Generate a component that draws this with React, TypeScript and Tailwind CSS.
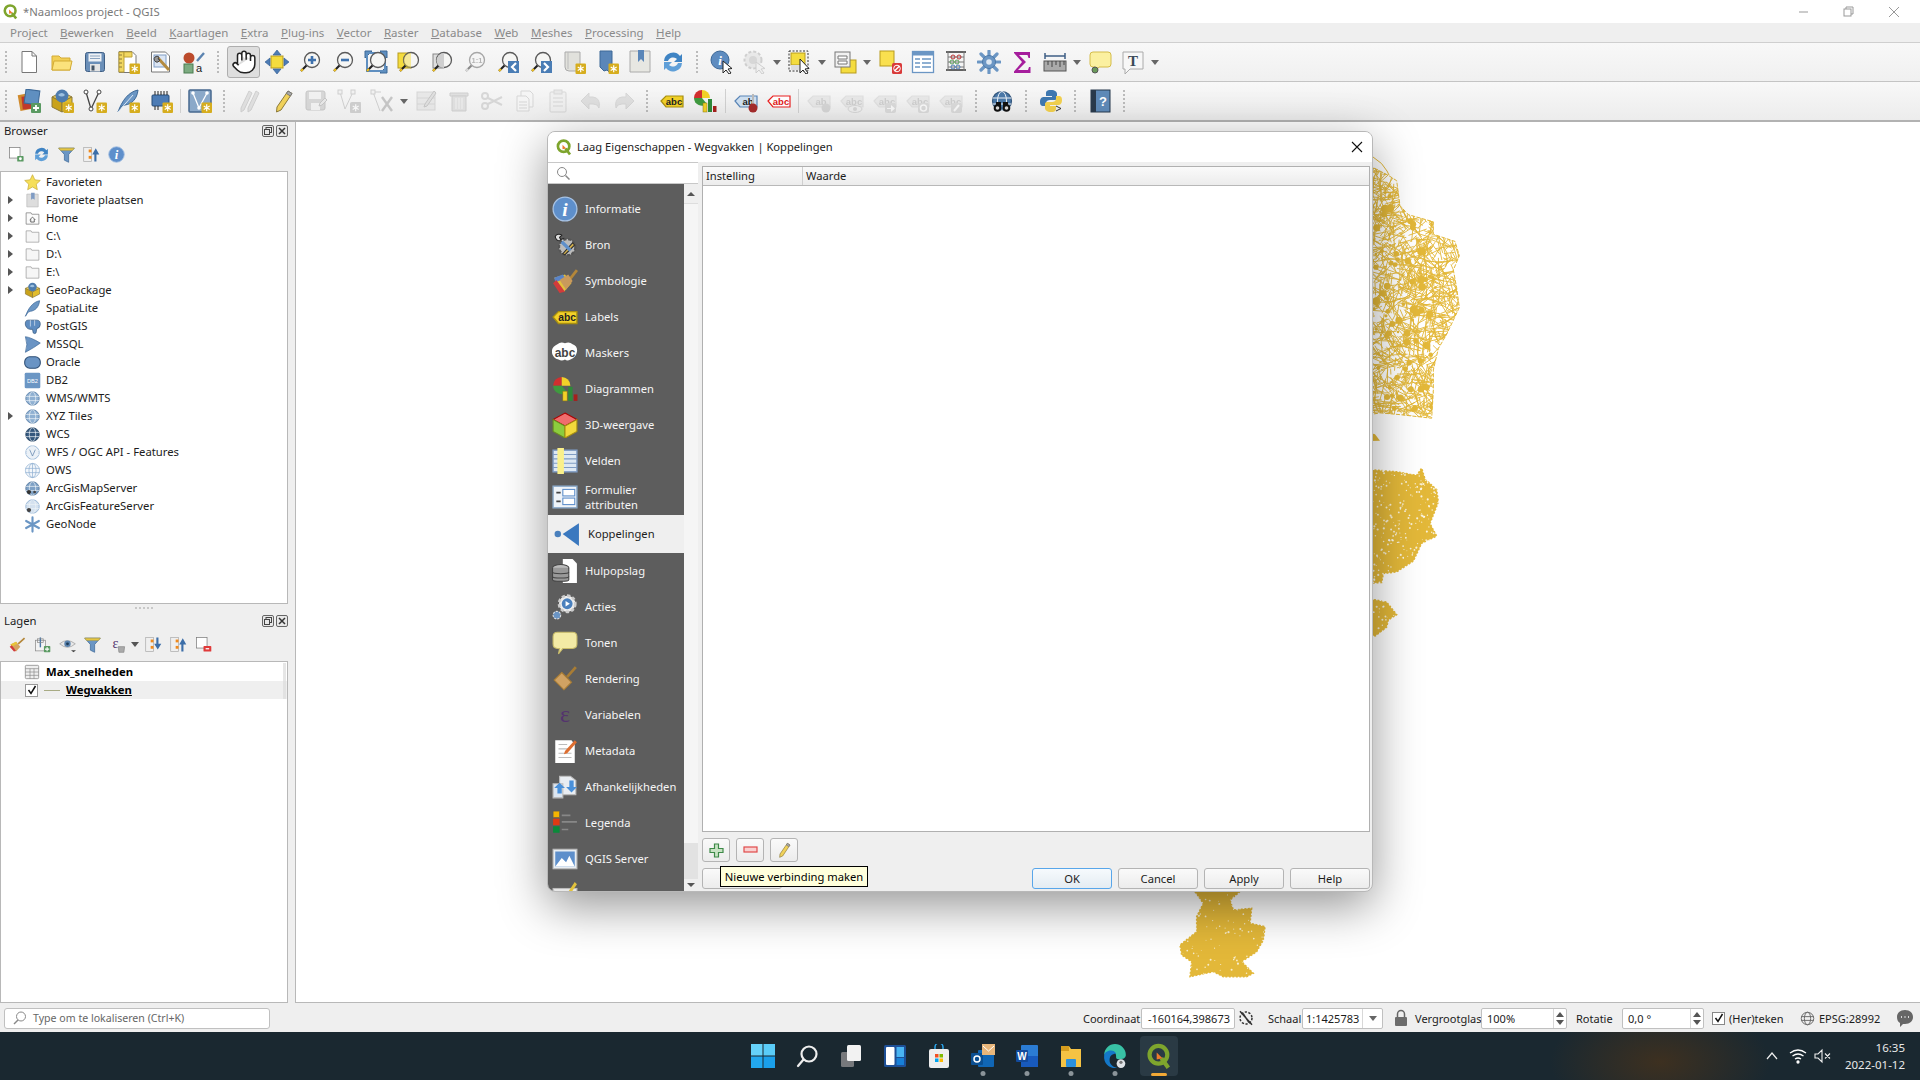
import React, { useMemo } from "react";

const Bdg = (
  <g>
    <rect x="13.5" y="13.5" width="10.5" height="10.5" rx="1" fill="#d6ad1e" />
    <path d="M18.7 15.2v7M15.7 17l6 3.5M21.7 17l-6 3.5" stroke="#fff" strokeWidth="1.2" />
  </g>
);
const Mag = ({ children }: { children?: React.ReactNode }) => (
  <g>
    <path d="M9 15L3 21" stroke="#222" strokeWidth="2.2" />
    <path d="M5 19L3 21" stroke="#f0c020" strokeWidth="2.2" />
    <circle cx="14" cy="10" r="7.5" fill="#f6f6f4" stroke="#5a5a5a" strokeWidth="1.3" />
    {children}
  </g>
);
const Globe = ({ f = "#8fb0d2", s = "#5a7fa8" }: { f?: string; s?: string }) => (
  <g fill="none" stroke={s}>
    <circle cx="12" cy="12" r="9.5" fill={f} strokeWidth="1.2" />
    <ellipse cx="12" cy="12" rx="4.5" ry="9.5" stroke="#eef3f8" />
    <path d="M2.8 9h18.4M2.8 15h18.4" stroke="#eef3f8" />
  </g>
);
const Tag = ({ f, s, t, tc = "#222" }: { f: string; s: string; t: string; tc?: string }) => (
  <g>
    <path d="M1 12l5-5h17v11H6z" fill={f} stroke={s} strokeWidth="1.2" />
    <text x="14" y="15.8" fontSize="9.5" fontWeight="700" textAnchor="middle" fill={tc} fontFamily="Liberation Sans, sans-serif">{t}</text>
  </g>
);
const Qlogo = (
  <g fill="none">
    <circle cx="11.5" cy="11" r="7.6" stroke="#7ea52d" strokeWidth="3.6" />
    <path d="M14 14l6 8" stroke="#7ea52d" strokeWidth="3.6" />
    <path d="M10 9l5 5-5 1z" fill="#ee7b2d" />
  </g>
);
const Pencil = (
  <g>
    <path d="M17 2l4 2.5L10 21l-4.5 2 .5-5z" fill="#f0d15a" stroke="#8c7a3a" />
    <path d="M17 2l4 2.5-1.6 2.5-4-2.5z" fill="#a9a9a9" stroke="#777" />
  </g>
);
const I: Record<string, React.ReactNode> = {
  doc: <g fill="#fff" stroke="#777"><path d="M5 1.5h10l4.5 4.5v16.5H5z" /><path d="M15 1.5V6h4.5" fill="none" /></g>,
  folder: <g stroke="#d3ab35"><path d="M2 20V6h7l2 2h9v12z" fill="#f2cf55" /><path d="M2 20l2-9h18l-2 9z" fill="#fbe27c" /></g>,
  save: <g><rect x="2.5" y="2.5" width="19" height="19" rx="2" fill="#6b8fb8" stroke="#3f5f85" /><rect x="5.5" y="3.5" width="13" height="8" fill="#eef1f5" /><path d="M7 6h10M7 8.5h10" stroke="#8aa3c0" /><rect x="7" y="14" width="10" height="7.5" fill="#e4e4e4" /><rect x="8.5" y="15.5" width="3" height="5" fill="#456" /></g>,
  newlayout: <g><path d="M3 1.5h13l4 4v17H3z" fill="#fff" stroke="#777" /><path d="M3 2h5v20H3z" fill="#f1d762" stroke="#bda136" /><path d="M3 5h3M3 9h3M3 13h3M3 17h3" stroke="#8c7a3a" /><path d="M8 2h8v5H8z" fill="#f1d762" stroke="#bda136" />{Bdg}</g>,
  layoutmgr: <g><path d="M2.5 2h14l4 4v16h-18z" fill="#fff" stroke="#777" /><rect x="5" y="5" width="12" height="12" fill="#dce6f4" stroke="#7f9cc4" /><path d="M9 8l11 12" stroke="#b48b3f" strokeWidth="3" /><path d="M6 7a3 3 0 0 1 4 0l-1 2 2 1-2 2a3 3 0 0 1-3-5z" fill="#999" stroke="#444" /></g>,
  style: <g><circle cx="7" cy="8" r="5.5" fill="#bc4b2c" /><rect x="2" y="14" width="9" height="9" fill="#7dab81" stroke="#4a7c50" /><path d="M15 11l7-8" stroke="#5b83b0" strokeWidth="2.4" /><text x="17" y="22" fontSize="11" fill="#222" textAnchor="middle" fontFamily="Liberation Sans, sans-serif">a</text></g>,
  hand: <path d="M18 11V6a2 2 0 0 0-2-2a2 2 0 0 0-2 2M14 10V4a2 2 0 0 0-2-2a2 2 0 0 0-2 2v2M10 10.500V6a2 2 0 0 0-2-2a2 2 0 0 0-2 2v8M18 8a2 2 0 1 1 4 0v6a8 8 0 0 1-8 8h-2c-2.800 0-4.500-.86-5.990-2.340l-3.600-3.600a2 2 0 0 1 2.830-2.820L7 15" fill="#fff" stroke="#222" strokeWidth="1.400" />,
  pansel: <g><rect x="6" y="6" width="12" height="12" fill="#f4dc3e" stroke="#b79b1f" /><g fill="#4d7cb5" stroke="#2f5a90" strokeWidth=".6"><path d="M12 0l4 5H8zM12 24l-4-5h8zM0 12l5-4v8zM24 12l-5 4V8z" /></g></g>,
  zin: <Mag><path d="M10 10h8M14 6v8" stroke="#3f72ad" strokeWidth="2.600" /></Mag>,
  zout: <Mag><path d="M10 10h8" stroke="#3f72ad" strokeWidth="2.600" /></Mag>,
  zfull: <g><g fill="#5f8fc0" stroke="#3c6897"><path d="M1 1h7L1 8zM23 1h-7l7 7zM23 23h-7l7-7z" /></g><rect x="3" y="3" width="18" height="18" fill="none" stroke="#5f8fc0" strokeWidth="2" /><Mag /></g>,
  zsel: <g><rect x="1" y="3" width="13" height="15" fill="#f4dc3e" stroke="#b79b1f" /><Mag /><path d="M14 3a7.500 7.500 0 0 0 0 15z" fill="#f4dc3e" opacity=".5" /></g>,
  zlayer: <g><rect x="3" y="4" width="10" height="14" fill="#dedede" stroke="#888" /><Mag /><path d="M14 3a7.500 7.500 0 0 0 0 15z" fill="#cfcfcf" /></g>,
  z11: <g><Mag /><text x="14" y="13" fontSize="7.500" fontWeight="700" textAnchor="middle" fill="#777" fontFamily="Liberation Sans, sans-serif">1:1</text></g>,
  zlast: <g><Mag /><rect x="12" y="11" width="11" height="12" fill="#4a7db5" /><path d="M20 13l-4 4 4 4" fill="none" stroke="#fff" strokeWidth="2.200" /></g>,
  znext: <g><Mag /><rect x="12" y="11" width="11" height="12" fill="#4a7db5" /><path d="M15 13l4 4-4 4" fill="none" stroke="#fff" strokeWidth="2.200" /></g>,
  bmnew: <g><path d="M3 2h15v19H7a4 4 0 0 1-4-4z" fill="#e1e1dc" stroke="#aaa" /><path d="M6 2v17" stroke="#bbb" />{Bdg}</g>,
  bm: <g><path d="M5 1h12v16l-3 5-2-2-3 1-4-4z" fill="#5a86b8" stroke="#3c6897" />{Bdg}</g>,
  bmlist: <g><path d="M2 1h20v21H2z" fill="#e7e7e2" stroke="#aaa" /><path d="M10 0h6v12l-3-3-3 3z" fill="#5a86b8" /></g>,
  refresh: <g fill="#3f84c4"><path d="M3 11a9 9 0 0 1 16-5l2-2v8h-8l3-3a5.500 5.500 0 0 0-9 2z" /><path d="M21 13a9 9 0 0 1-16 5l-2 2v-8h8l-3 3a5.500 5.500 0 0 0 9-2z" fill="#5f9fd8" /></g>,
  identify: <g><circle cx="10" cy="10" r="9" fill="#5e8cc0" stroke="#3c6897" /><text x="10" y="15" fontSize="13" fontWeight="700" fontStyle="italic" fill="#fff" textAnchor="middle" fontFamily="Liberation Serif, serif">i</text><path d="M13 11v12l3-3 3 4 2-1-3-4 4-.5z" fill="#fff" stroke="#222" /></g>,
  action: <g><circle cx="10" cy="10" r="8.500" fill="#ddd" stroke="#aaa" strokeDasharray="3 2" strokeWidth="2" /><circle cx="10" cy="10" r="4" fill="#bbb" /><path d="M13 12v11l3-3 3 4 2-1-3-4 4-.5z" fill="#eee" stroke="#aaa" /></g>,
  select: <g><rect x="1" y="1" width="19" height="20" fill="none" stroke="#333" strokeDasharray="2 1.500" /><rect x="3" y="3" width="14" height="12" fill="#f4dc3e" stroke="#b79b1f" /><rect x="3" y="15" width="14" height="5" fill="#ddd" /><path d="M12 9v14l3-3 3 4 2-1-3-4 4-.5z" fill="#fff" stroke="#222" /></g>,
  tblsel: <g><rect x="8" y="10" width="15" height="13" fill="#f4dc3e" stroke="#b79b1f" /><rect x="2" y="2" width="15" height="15" fill="#f1f1f1" stroke="#777" /><path d="M5 6h9v3H5zM5 11h9v3H5z" fill="#fff" stroke="#777" /></g>,
  desel: <g><rect x="2" y="1" width="14" height="15" fill="#f9e04f" stroke="#b79b1f" /><rect x="14" y="13" width="10" height="11" rx="1.500" fill="#d93a3a" /><path d="M16.500 21l5-5" stroke="#fff" strokeWidth="1.500" /><circle cx="19" cy="18.500" r="3.300" fill="none" stroke="#fff" /></g>,
  attr: <g><rect x="1.500" y="1.500" width="21" height="21" fill="#fff" stroke="#6b96c4" strokeWidth="1.300" /><rect x="1.500" y="1.500" width="21" height="4" fill="#6b96c4" /><path d="M4 9h5M4 13h5M4 17h5M11 9h9M11 13h9M11 17h9" stroke="#6b96c4" strokeWidth="1.500" /></g>,
  abacus: <g fill="none"><path d="M2 2h20M2 20h20" stroke="#333" strokeWidth="1.500" /><path d="M4 1v20M20 1v20M4 7h16M4 12h16M4 17h16" stroke="#777" /><g stroke="#b33"><circle cx="9" cy="7" r="2" /><circle cx="15" cy="7" r="2" /></g><g stroke="#5a9e5a"><circle cx="8" cy="12" r="2" /><circle cx="13" cy="12" r="2" /></g><g stroke="#4d7cb5"><circle cx="9" cy="17" r="2" /><circle cx="14" cy="17" r="2" /></g></g>,
  gear: <g><path d="M12 1v5M12 18v5M1 12h5M18 12h5M4 4l4 4M16 16l4 4M20 4l-4 4M8 16l-4 4" stroke="#6b96c4" strokeWidth="3.200" strokeLinecap="round" /><circle cx="12" cy="12" r="6.500" fill="#6b96c4" stroke="#4a78a8" /><circle cx="12" cy="12" r="2.800" fill="#dde8f3" /></g>,
  sigma: <path d="M4 2h16v6l-1.500 0-1-3H9l7 7-8 8h10l1-3h1.500v6H4v-1.500l8-9.500-8-9z" fill="#a51d9c" />,
  ruler: <g><path d="M2 3v6M22 3v6M2 6h20" stroke="#3f5f85" strokeWidth="1.500" /><rect x="1" y="11" width="22" height="10" fill="#aaa" stroke="#555" /><path d="M5 11v4M9 11v6M13 11v4M17 11v6M21 11v4" stroke="#444" /></g>,
  tip: <g><path d="M2 5q0-3 3-3h15q3 0 3 3v9q0 3-3 3H11l-4 5v-5H5q-3 0-3-3z" fill="#fbf0a0" stroke="#d4bc4a" /><circle cx="7" cy="20" r="3" fill="#6a9a5a" stroke="#555" /></g>,
  textann: <g><path d="M2 2h20v17H9l-5 5v-5H2z" fill="#f7f7f7" stroke="#aaa" /><text x="12" y="16" fontSize="15" fontWeight="700" textAnchor="middle" fill="#3c4a58" fontFamily="Liberation Serif, serif">T</text></g>,

  dsm: <g><rect x="2" y="5" width="12" height="16" fill="#d08a2c" transform="rotate(-10 8 13)" /><rect x="5" y="7" width="12" height="13" fill="#c0392b" transform="rotate(-6 11 13)" /><rect x="8" y="1" width="14" height="14" fill="#5f8fc0" stroke="#3c6897" transform="rotate(8 15 8)" /><rect x="14" y="14" width="10" height="10" rx="1" fill="#5a9a62" /><path d="M19 16v6M16 19h6" stroke="#fff" strokeWidth="1.800" /></g>,
  gpkg: <g><path d="M12 3l10 5-10 5L2 8z" fill="#f2cf55" stroke="#8c7a3a" /><path d="M2 8v10l10 5V13z" fill="#c9a21a" stroke="#8c7a3a" /><path d="M22 8v10l-10 5V13z" fill="#e2bd2e" stroke="#8c7a3a" /><circle cx="12" cy="7" r="6.500" fill="#4e7cae" /><path d="M8 6q4-4 7 0-3 3-7 0z" fill="#9cc0e0" />{Bdg}</g>,
  vnew: <g fill="none" stroke="#444"><path d="M3 3l5 17 8-17" strokeWidth="1.300" /><circle cx="3" cy="3" r="2" fill="#fff" /><circle cx="16" cy="3" r="2" fill="#fff" /><circle cx="8" cy="20" r="2" fill="#fff" /><g stroke="none">{Bdg}</g></g>,
  feather: <g><path d="M2 23C6 12 12 3 22 1c-1 9-6 14-13 15l-3 1z" fill="#6b96c4" stroke="#3c6897" /><path d="M2 23L17 6" stroke="#dce8f3" />{Bdg}</g>,
  chip: <g><rect x="3" y="6" width="17" height="11" rx="1" fill="#4d7cb5" stroke="#274d78" /><path d="M6 2v4M9 2v4M12 2v4M15 2v4M18 2v4M6 17v4M9 17v4" stroke="#222" />{Bdg}</g>,
  vbox: <g><rect x="1" y="1" width="22" height="22" rx="1" fill="#8ba9c9" stroke="#47688e" strokeWidth="1.500" /><path d="M5 4l6 15 8-15" fill="none" stroke="#fff" strokeWidth="1.300" /><circle cx="5" cy="4" r="1.800" fill="#fff" /><circle cx="19" cy="4" r="1.800" fill="#fff" /><circle cx="11" cy="19" r="1.800" fill="#fff" />{Bdg}</g>,
  edits: <g fill="#ccc" stroke="#aaa"><path d="M11 2l3 2L6 21l-3 2 0-4z" /><path d="M18 2l3 2-8 17-3 2 0-4z" /></g>,
  pencil: Pencil,
  savee: <g><rect x="2" y="2" width="19" height="19" rx="2" fill="#bbb" stroke="#999" /><rect x="5" y="3" width="12" height="7" fill="#eee" /><rect x="7" y="14" width="9" height="7" fill="#eee" /><path d="M16 14l5-5 2 2-5 5-3 1z" fill="#ddd" stroke="#999" /></g>,
  vadd: <g fill="none" stroke="#aaa"><path d="M3 3l5 17 8-17" /><rect x="1" y="1" width="4" height="4" fill="#eee" /><rect x="14" y="1" width="4" height="4" fill="#eee" />{Bdg}</g>,
  vtool: <g fill="none" stroke="#aaa"><path d="M3 3h8M3 3l7 19" /><rect x="1" y="1" width="4" height="4" fill="#eee" /><path d="M12 8l10 14M22 8L12 22" stroke="#999" strokeWidth="2.400" /></g>,
  modify: <g><rect x="3" y="3" width="18" height="18" fill="#ddddd0" stroke="#b9b9aa" /><path d="M3 9h18M3 15h18" stroke="#b9b9aa" /><path d="M20 2l2 2-9 13-3 1 1-3z" fill="#ccc" stroke="#999" /></g>,
  trash: <g fill="#ccc" stroke="#aaa"><path d="M3 4h18v3H3z" /><path d="M5 7h14v15H5z" /><path d="M9 9v11M12 9v11M15 9v11" stroke="#eee" /></g>,
  scissors: <g fill="none" stroke="#bbb" strokeWidth="2"><circle cx="5" cy="7" r="3" /><circle cx="5" cy="17" r="3" /><path d="M8 9l14 7M8 15l14-7" /></g>,
  copy: <g fill="#f6f6f6" stroke="#bbb"><path d="M8 2h9l3 3v13H8z" /><path d="M4 7h9l3 3v12H4z" /><path d="M6 13h8M6 16h8M6 19h8" /></g>,
  paste: <g fill="#eee" stroke="#bbb"><rect x="4" y="3" width="16" height="20" rx="1" /><rect x="8" y="1" width="8" height="4" fill="#ddd" /><path d="M7 9h10M7 13h10M7 17h10" /></g>,
  undo: <path d="M10 4l-8 8 8 8v-5h4q5 0 6 4 2-10-6-11h-4z" fill="#ccc" stroke="#bbb" />,
  redo: <path d="M14 4l8 8-8 8v-5h-4q-5 0-6 4-2-10 6-11h4z" fill="#ccc" stroke="#bbb" />,
  lbl: <Tag f="#f2d128" s="#a88f10" t="abc" />,
  diagram: <g><path d="M9 1a8 8 0 0 0-8 8h8z" fill="#d12f2f" /><path d="M9 1a8 8 0 0 1 8 8H9z" fill="#f2d128" /><path d="M1 9a8 8 0 0 0 13 6L9 9z" fill="#3f9a3f" /><rect x="10" y="14" width="4" height="9" fill="#f2d128" stroke="#8a7a10" strokeWidth=".5" /><rect x="15" y="10" width="4" height="13" fill="#2e8a3a" /><rect x="20" y="17" width="3.500" height="6" fill="#a5201c" /></g>,
  lbln: <g><Tag f="#cfe0f1" s="#5a86b8" t="ab" /><path d="M18 5h2v12h-2z" fill="#bbb" /><circle cx="19" cy="19" r="4.500" fill="#a52c2c" /></g>,
  lblr: <Tag f="#fff" s="#ea2020" t="abc" tc="#e21818" />,
  lbld1: <g><Tag f="#dfdfd6" s="#ccc" t="ab" tc="#aaa" /><circle cx="19" cy="19" r="4.500" fill="#bbb" /></g>,
  lbld2: <g><Tag f="#dfdfd6" s="#ccc" t="abc" tc="#aaa" /><ellipse cx="15" cy="20" rx="7" ry="3.500" fill="#eee" stroke="#bbb" /><circle cx="15" cy="20" r="2" fill="#bbb" /></g>,
  lbld3: <g><Tag f="#dfdfd6" s="#ccc" t="abc" tc="#aaa" /><rect x="12" y="14" width="11" height="10" rx="2" fill="#c5c5c5" /><path d="M14 19h4v-3l4 3.500-4 3.500v-3h-4z" fill="#fff" /></g>,
  lbld4: <g><Tag f="#dfdfd6" s="#ccc" t="abc" tc="#aaa" /><rect x="12" y="14" width="11" height="10" rx="2" fill="#c5c5c5" /><circle cx="17.500" cy="19" r="3" fill="none" stroke="#fff" strokeWidth="1.500" /></g>,
  lbld5: <g><Tag f="#dfdfd6" s="#ccc" t="abc" tc="#aaa" /><rect x="12" y="14" width="11" height="10" rx="2" fill="#c5c5c5" /><path d="M15 22l5-6" stroke="#fff" strokeWidth="2" /></g>,
  binoc: <g><Globe f="#4a78a8" s="#35587e" /><circle cx="7.500" cy="19" r="3.800" fill="#111" /><circle cx="16.500" cy="19" r="3.800" fill="#111" /><rect x="6" y="13" width="5" height="6" fill="#111" /><rect x="13" y="13" width="5" height="6" fill="#111" /><circle cx="7.500" cy="19" r="1.800" fill="#ddd" /><circle cx="16.500" cy="19" r="1.800" fill="#ddd" /></g>,
  python: <g><path d="M12 1c-5 0-5 2-5 4v2h6v1H5c-2 0-4 1-4 5s2 4 4 4h2v-3c0-2 2-3 4-3h5c1.500 0 2-1 2-2V5c0-2-2-4-6-4z" fill="#3f78b0" /><path d="M12 23c5 0 5-2 5-4v-2h-6v-1h8c2 0 4-1 4-5s-2-4-4-4h-2v3c0 2-2 3-4 3H8c-1.500 0-2 1-2 2v4c0 2 2 4 6 4z" fill="#f2d04e" /><path d="M17 17l5 2.500-5 2.500" fill="none" stroke="#333" /></g>,
  help: <g><rect x="3" y="1" width="19" height="22" fill="#5f8ab8" stroke="#26384c" /><rect x="3" y="1" width="5" height="22" fill="#2a3a4c" /><text x="15" y="17" fontSize="13" fontWeight="700" textAnchor="middle" fill="#fff" fontFamily="Liberation Sans, sans-serif">?</text></g>,

  info: <g><circle cx="12" cy="12" r="11" fill="#5e8fcb" stroke="#a7c2e3" strokeWidth="1.200" /><text x="12" y="18.500" fontSize="18" fontWeight="700" fontStyle="italic" fill="#fff" textAnchor="middle" fontFamily="Liberation Serif, serif">i</text></g>,
  bron: <g><path d="M3 4a4 4 0 0 1 6-1l-2 2 1 2 3-1 3 5-2 2-4-5a4 4 0 0 1-5-4z" fill="#ddd" stroke="#222" /><circle cx="14" cy="14" r="7.500" fill="#bbb" stroke="#555" strokeDasharray="3 1.500" strokeWidth="2" /><path d="M10 20l9-10 2 2-9 9z" fill="#d4b04a" stroke="#333" /><path d="M9 9l8 8" stroke="#5e8fcb" strokeWidth="3" /></g>,
  symb: <g><path d="M2 9l10-3 6 8-7 8z" fill="#e2c23c" /><path d="M2 9l8-3 3 4-10 3z" fill="#5a84c8" /><path d="M1 14l6 9 5-1-8-11z" fill="#d13b3b" /><path d="M16 11l7-9" stroke="#b4873a" strokeWidth="2.500" /><path d="M7 11l8-5 4 6-6 8z" fill="#c99a5c" /></g>,
  mask: <g><path d="M5 4q3-3 7-1 4-2 7 1 5 2 4 7t-6 7q-3 2-5 0-3 2-6 0-5-1-6-6t5-8z" fill="#fff" /><text x="12" y="15.500" fontSize="11" fontWeight="700" fill="#444" textAnchor="middle" fontFamily="Liberation Sans, sans-serif">abc</text></g>,
  cube: <g><path d="M12 1l11 6-11 6L1 7z" fill="#f06d6d" stroke="#a00" /><path d="M1 7v11l11 6V13z" fill="#8ccc3e" stroke="#6a8a20" /><path d="M23 7v11l-11 6V13z" fill="#f2d83c" stroke="#a88f10" /></g>,
  fields: <g><rect x="1" y="2" width="22" height="20" fill="#dde8f3" stroke="#7f9cc4" strokeWidth="1.300" /><path d="M1 6h22M1 10h22M1 14h22M1 18h22" stroke="#7f9cc4" /><rect x="5" y="0" width="6" height="24" fill="#faf08a" /></g>,
  form: <g><rect x="1" y="2" width="22" height="20" fill="#eef3f8" stroke="#8aa9c9" strokeWidth="1.300" /><rect x="10" y="5" width="11" height="6" fill="#fff" stroke="#5e8fcb" /><rect x="10" y="13" width="11" height="6" fill="#fff" stroke="#5e8fcb" /><path d="M4 8h4M4 16h4" stroke="#444" strokeWidth="1.500" /></g>,
  link: <g><circle cx="3.500" cy="12" r="3" fill="#4a80bd" /><path d="M8 12L23 2v21z" fill="#3a78bf" /></g>,
  storage: <g><path d="M10 1h9l4 4v18H10z" fill="#fff" /><ellipse cx="8" cy="9" rx="7.500" ry="3" fill="#bbb" stroke="#444" /><path d="M.5 9v11c0 2 15 2 15 0V9" fill="#999" stroke="#444" /><path d="M.5 13c0 2 15 2 15 0M.5 17c0 2 15 2 15 0" fill="none" stroke="#444" /></g>,
  actions: <g><circle cx="14" cy="9" r="7.500" fill="#eee" stroke="#ccc" strokeDasharray="3 2" strokeWidth="2.500" /><circle cx="14" cy="9" r="5" fill="#4a80bd" /><path d="M12.500 6.500l4 2.500-4 2.500z" fill="#fff" /><circle cx="4.500" cy="19.500" r="3.500" fill="#6a94c4" stroke="#ddd" strokeDasharray="2 1" /></g>,
  tonen: <path d="M1 6q0-4 4-4h14q4 0 4 4v7q0 4-4 4H10l-4 5 1-5H5q-4 0-4-4z" fill="#f3eaa5" stroke="#c9bc6a" />,
  render: <g><path d="M14 10l8-9" stroke="#a87c34" strokeWidth="2.500" /><path d="M9 6l9 9-7 7-9-9z" fill="#d0a263" stroke="#a87c34" /></g>,
  eps: <text x="12" y="18" fontSize="22" fill="#54336e" textAnchor="middle" fontFamily="Liberation Serif, serif">ε</text>,
  meta: <g><path d="M3 2h15l3 4v17H3z" fill="#fff" /><path d="M6 10h10M6 14h12M6 18h12M6 6h8" stroke="#bbb" /><path d="M21 2l2 2-9 10-3 1 1-3z" fill="#de6e30" /></g>,
  deps: <g><path d="M7 2h10l5 4v13H7z" fill="#e9edf2" stroke="#bbb" /><path d="M1 9h9v13H1z" fill="#dce6f1" stroke="#bbb" /><path d="M2 13l5-5 5 5H9v5H5v-5z" fill="#4a90d9" /><path d="M23 12l-5 5-5-5h3V6h4v6z" fill="#4a90d9" /></g>,
  legend: <g><rect x="1" y="1" width="6" height="6" fill="#f5b400" stroke="#555" strokeWidth=".5" /><rect x="1" y="8" width="6" height="6" fill="#e03a12" /><rect x="1" y="15" width="6" height="6" fill="#0a8a3a" /><path d="M9 5h8M9 11h14M9 18h6" stroke="#888" strokeWidth="1.500" /></g>,
  server: <g><rect x="1" y="3" width="22" height="18" fill="#e8edf2" stroke="#bbb" /><path d="M3 5h18v14H3z" fill="#5e8fcb" /><path d="M3 19l6-8 4 4 3-6 5 10z" fill="#fff" /></g>,
  digit: <g><rect x="1" y="6" width="22" height="18" fill="#e8e8e8" stroke="#bbb" /><path d="M21 0l2 2-8 12-3 1 1-3z" fill="#e2c23c" /></g>,

  star: <path d="M12 1l3.300 7.200 7.700.9-5.700 5.300 1.500 7.800-6.800-3.900-6.800 3.900 1.500-7.800L1 9.100l7.700-.9z" fill="#f6df59" stroke="#c8ac35" />,
  fav: <g><path d="M4 3h16v18H4z" fill="#ddd" stroke="#bbb" /><path d="M10 1h5v10l-2.500-2-2.500 2z" fill="#7f9cc4" /></g>,
  home: <g fill="none" stroke="#777"><path d="M3 4h7l1 2h10v14H3z" fill="#fbfbfb" /><path d="M8 14l4-4 4 4M9.500 13v4h5v-4" stroke="#333" /></g>,
  dir: <path d="M3 4h7l1 2h10v14H3z" fill="#f6f6f6" stroke="#999" />,
  gpk: <g><path d="M12 4l10 5-10 5L2 9z" fill="#f2cf55" stroke="#8c7a3a" /><path d="M2 9v8l10 5v-8z" fill="#c9a21a" stroke="#8c7a3a" /><path d="M22 9v8l-10 5v-8z" fill="#e2bd2e" stroke="#8c7a3a" /><circle cx="12" cy="7" r="6" fill="#4e7cae" /><path d="M8 6q4-4 7 0-3 3-7 0z" fill="#9cc0e0" /></g>,
  spatial: <path d="M2 23C6 12 12 3 22 1c-1 9-6 14-13 15l-3 1z" fill="#6b96c4" stroke="#3c6897" />,
  pg: <g><path d="M6 3h12q5 0 5 6 0 5-5 6l-1 6q-2 2-4 0l-1-5q-8 1-10-6Q1 3 6 3z" fill="#5e8cc0" stroke="#35587e" /><path d="M9 3v9M15 3v8" stroke="#dce6f1" /></g>,
  mssql: <path d="M2 1q8 1 21 9-8 6-21 13 4-11 0-22z" fill="#6a94c4" stroke="#3c6897" />,
  oracle: <rect x="1" y="4" width="22" height="16" rx="7" fill="#6a94c4" stroke="#2f4f75" strokeWidth="1.500" />,
  db2: <g><rect x="1" y="1" width="22" height="22" rx="2" fill="#6b96c4" /><text x="12" y="15.500" fontSize="8" fill="#fff" textAnchor="middle" fontFamily="Liberation Sans, sans-serif">DB2</text></g>,
  wms: <Globe />,
  wcs: <Globe f="#35587e" s="#22405f" />,
  wfs: <g><Globe f="#eaf0f7" s="#8fb0d2" /><path d="M8 8l4 9 4-9" fill="none" stroke="#5a7fa8" /></g>,
  ows: <g fill="none" stroke="#8fb0d2"><circle cx="12" cy="12" r="10" fill="#f3f7fb" /><ellipse cx="12" cy="12" rx="5" ry="10" /><path d="M2 9h20M2 15h20M12 2v20" /></g>,
  arc: <g><Globe f="#7ea1c6" s="#54779d" /><circle cx="7" cy="17" r="3" fill="#333" /><circle cx="15" cy="17" r="2" fill="#444" /></g>,
  arcf: <g><Globe f="#d4e1ef" s="#8fb0d2" /><circle cx="7" cy="17" r="3" fill="#444" /></g>,
  geonode: <g stroke="#6b96c4" strokeWidth="3" strokeLinecap="round"><path d="M12 2v20M3 7l18 10M21 7L3 17" /></g>,

  broom: <g><path d="M2 12l8-4 6 7-6 7z" fill="#d6a560" /><path d="M2 12l8-4 2 3-8 4z" fill="#e8c53a" /><path d="M1 15l6 7 3-1-6-8z" fill="#d13b3b" /><path d="M13 11l9-8" stroke="#b4873a" strokeWidth="2.400" /></g>,
  addgrp: <g fill="none" stroke="#888"><rect x="2" y="6" width="14" height="15" fill="#f3f3f3" /><path d="M9 2v14" stroke="#4a78a8" strokeWidth="2" /><rect x="5" y="4" width="8" height="5" /><rect x="14" y="14" width="9" height="9" rx="1" fill="#5a9a62" stroke="none" /><path d="M18.500 15.500v6M15.500 18.500h6" stroke="#fff" strokeWidth="1.500" /></g>,
  eye: <g><path d="M1 11q10-9 22 0-11 10-22 0z" fill="#e8e8e8" stroke="#999" /><circle cx="12" cy="11" r="4.500" fill="#5a82ad" /><circle cx="12" cy="11" r="2" fill="#1e3a55" /><path d="M17 20l3.500 3 3.500-3z" fill="#444" /></g>,
  filter: <g><path d="M1 3h22l-8 9v11l-6-3v-8z" fill="#6b96c4" stroke="#3c6897" /><path d="M1 3h22l-2.500 3h-17z" fill="#f0cf44" stroke="#bda136" /></g>,
  eps2: <g><text x="9" y="17" fontSize="20" fill="#54336e" textAnchor="middle" fontFamily="Liberation Serif, serif">ε</text><path d="M13 15h9l-1 8h-7z" fill="#aaa" stroke="#888" /></g>,
  expand: <g><rect x="1" y="2" width="11" height="20" fill="none" stroke="#aaa" /><rect x="8" y="5" width="4" height="4" fill="#f08a1d" /><rect x="8" y="14" width="4" height="4" fill="#f08a1d" /><path d="M16 2h3v9h4l-5 8-5-8h3z" fill="#3c6ea8" /></g>,
  collapse: <g><rect x="1" y="2" width="11" height="20" fill="none" stroke="#aaa" /><rect x="8" y="5" width="4" height="4" fill="#f08a1d" /><rect x="8" y="14" width="4" height="4" fill="#f08a1d" /><path d="M16 22h3v-10h4l-5-9-5 9h3z" fill="#3c6ea8" /></g>,
  rmlayer: <g><rect x="2" y="2" width="15" height="15" fill="#fff" stroke="#777" /><rect x="12" y="14" width="11" height="8" rx="1" fill="#e03a3a" /><path d="M15 18h5" stroke="#fff" strokeWidth="1.800" /></g>,
  addnew: <g><rect x="2" y="2" width="15" height="15" fill="#fff" stroke="#777" /><rect x="13" y="14" width="9" height="8" rx="1" fill="#5a9a62" /><circle cx="17.500" cy="18" r="2" fill="#fff" /></g>,
  tblt: <g><rect x="2" y="2" width="20" height="20" rx="1.500" fill="#efefef" stroke="#777" /><path d="M2 7h20M2 12h20M2 17h20M9 7v15M15 7v15" stroke="#888" /></g>,
};

const Icon = ({ n, s = 24, c }: { n: string; s?: number; c?: string }) => (
  <svg viewBox="0 0 24 24" width={s} height={s} className={c}>{I[n]}</svg>
);

const HANDLE: Record<string, string> = { h12: "w-[12px]", h17: "w-[17px]", h15: "w-[15px]", h16: "w-[16px]", h18: "w-[18px]" };
const SEP: Record<string, string> = { s6: "w-[6px]", s8: "w-[8px]", s7: "w-[7px]" };
const DROP: Record<string, string> = { d12: "w-[12px]", d10: "w-[11px]" };

function Tools({ items }: { items: string[] }) {
  return (
    <>
      {items.map((t, i) => {
        if (HANDLE[t])
          return (
            <div key={i} className={`${HANDLE[t]} shrink-0 flex justify-center`}>
              <div className="h-[22px] w-[3px] border-l-2 border-dotted border-[#bbbbbb]" />
            </div>
          );
        if (SEP[t])
          return (
            <div key={i} className={`${SEP[t]} shrink-0 flex justify-center`}>
              <div className="h-[24px] w-px bg-[#d0d0d0]" />
            </div>
          );
        if (DROP[t])
          return (
            <div key={i} className={`${DROP[t]} shrink-0 flex justify-center`}>
              <div className="border-x-[4px] border-t-[5px] border-x-transparent border-t-[#666666]" />
            </div>
          );
        const dis = t[0] === "~";
        const name = dis ? t.slice(1) : t;
        if (name === "hand")
          return (
            <div key={i} className="w-[33px] h-[32px] shrink-0 flex items-center justify-center rounded-[3px] bg-[#dedede] border border-[#aeaeae]">
              <Icon n={name} s={26} />
            </div>
          );
        return (
          <div key={i} className={`w-[33px] h-[32px] shrink-0 flex items-center justify-center ${dis ? "opacity-50 grayscale" : ""}`}>
            <Icon n={name} s={24} />
          </div>
        );
      })}
    </>
  );
}

const tb1 = ["doc","folder","save","newlayout","layoutmgr","style","h17","hand","pansel","zin","zout","zfull","zsel","zlayer","~z11","zlast","znext","bmnew","bm","bmlist","refresh","h16","identify","~action","d12","select","d12","tblsel","d12","desel","attr","abacus","gear","sigma","ruler","d12","tip","textann","d12"];
const tb2 = ["dsm","gpkg","vnew","feather","chip","s6","vbox","h17","~edits","pencil","~savee","~vadd","~vtool","d10","~modify","~trash","~scissors","~copy","~paste","~undo","~redo","h15","lbl","diagram","s8","lbln","lblr","s7","~lbld1","~lbld2","~lbld3","~lbld4","~lbld5","h18","binoc","h16","python","h16","help","h16"];

const menu: [string, string][] = [["", "Project"],["B","ewerken"],["B","eeld"],["K","aartlagen"],["E","xtra"],["P","lug-ins"],["V","ector"],["R","aster"],["D","atabase"],["W","eb"],["M","eshes"],["P","rocessing"],["H","elp"]];

const browser: [string, string, boolean][] = [
  ["star","Favorieten",false],["fav","Favoriete plaatsen",true],["home","Home",true],["dir","C:\\",true],["dir","D:\\",true],["dir","E:\\",true],["gpk","GeoPackage",true],["spatial","SpatiaLite",false],["pg","PostGIS",false],["mssql","MSSQL",false],["oracle","Oracle",false],["db2","DB2",false],["wms","WMS/WMTS",false],["wms","XYZ Tiles",true],["wcs","WCS",false],["wfs","WFS / OGC API - Features",false],["ows","OWS",false],["arc","ArcGisMapServer",false],["arcf","ArcGisFeatureServer",false],["geonode","GeoNode",false],
];

const side: [string, string][] = [["info","Informatie"],["bron","Bron"],["symb","Symbologie"],["lbl","Labels"],["mask","Maskers"],["diagram","Diagrammen"],["cube","3D-weergave"],["fields","Velden"],["form","Formulier attributen"],["link","Koppelingen"],["storage","Hulpopslag"],["actions","Acties"],["tonen","Tonen"],["render","Rendering"],["eps","Variabelen"],["meta","Metadata"],["deps","Afhankelijkheden"],["legend","Legenda"],["server","QGIS Server"],["digit","Digitaliseren"]];

function rng(seed: number) {
  let a = seed;
  return () => {
    a = (a + 0x6d2b79f5) | 0;
    let t = Math.imul(a ^ (a >>> 15), 1 | a);
    t = (t + Math.imul(t ^ (t >>> 7), 61 | t)) ^ t;
    return ((t ^ (t >>> 14)) >>> 0) / 4294967296;
  };
}
const z8 = (p: number[][]) => p.map(([x, y]) => `${1300 + x / 3},${120 + y / 2.8}`).join(" ");
const z7 = (p: number[][]) => p.map(([x, y]) => `${1000 + x / 3},${820 + y / 3}`).join(" ");
const upper = z8([[150,100],[265,155],[290,170],[300,240],[325,265],[400,285],[400,320],[465,340],[478,380],[460,420],[470,470],[478,525],[440,600],[415,640],[400,700],[400,760],[395,835],[300,825],[240,820],[150,835]]);
const mid = z8([[150,975],[290,985],[350,995],[365,975],[375,1005],[410,1035],[415,1070],[390,1130],[410,1165],[365,1185],[340,1235],[290,1265],[250,1270],[245,1295],[150,1300]]);
const low = z8([[150,1330],[260,1350],[290,1385],[265,1400],[260,1420],[225,1445],[150,1445]]);
const tiny = z8([[150,860],[225,880],[240,898],[150,900]]);
const bottom = z7([[560,180],[760,180],[690,240],[700,270],[755,265],[750,310],[795,320],[790,360],[770,395],[725,425],[760,460],[740,470],[670,470],[640,455],[570,470],[575,425],[545,405],[540,375],[590,335],[590,290],[610,250]]);

function MapLayer() {
  const { lines, blobs, specksA, specksB } = useMemo(() => {
    const r = rng(42);
    let l = "";
    for (let i = 0; i < 1700; i++) {
      const x = 1360 + r() * 105, y = 157 + r() * 262, a = r() * Math.PI, d = 5 + r() * 18;
      l += `M${x.toFixed(1)} ${y.toFixed(1)}L${(x + Math.cos(a) * d).toFixed(1)} ${(y + Math.sin(a) * d).toFixed(1)}`;
    }
    const bl = Array.from({ length: 90 }, () => [1370 + r() * 70, 190 + r() * 225, 1 + r() * 3]);
    const sa = Array.from({ length: 420 }, () => [1372 + r() * 70, 466 + r() * 175, 0.4 + r() * 0.7]);
    const sb = Array.from({ length: 110 }, () => [1180 + r() * 85, 890 + r() * 88, 0.4 + r() * 0.7]);
    return { lines: l, blobs: bl, specksA: sa, specksB: sb };
  }, []);
  const gold = "#e3b839";
  return (
    <svg className="absolute inset-0" width="1624" height="881" viewBox="296 122 1624 881">
      <defs>
        <clipPath id="cu"><polygon points={upper} /></clipPath>
      </defs>
      <g clipPath="url(#cu)">
        <path d={lines} stroke={gold} strokeWidth="0.9" fill="none" />
        {blobs.map((b, i) => <circle key={i} cx={b[0]} cy={b[1]} r={b[2]} fill={gold} />)}
      </g>
      <polygon points={upper} fill="none" stroke={gold} strokeWidth="1" strokeDasharray="4 1.500" />
      <path d="M1373 157q10 6 14 14l2 4" fill="none" stroke={gold} />
      <polygon points={mid} fill={gold} stroke={gold} strokeDasharray="2 1.500" strokeWidth="1.500" />
      <polygon points={low} fill={gold} stroke={gold} strokeDasharray="2 1.500" strokeWidth="1.500" />
      <polygon points={tiny} fill={gold} />
      <polygon points={bottom} fill={gold} stroke={gold} strokeDasharray="2 1.500" strokeWidth="1.500" />
      {specksA.map((b, i) => <circle key={i} cx={b[0]} cy={b[1]} r={b[2]} fill="#fff" opacity="0.8" />)}
      {specksB.map((b, i) => <circle key={i} cx={b[0]} cy={b[1]} r={b[2]} fill="#fff" opacity="0.75" />)}
    </svg>
  );
}

const Float = () => (
  <div className="flex gap-[2px] items-center">
    <svg width="12" height="12" viewBox="0 0 12 12"><rect x=".5" y=".5" width="11" height="11" rx="1.500" fill="#e8e8e8" stroke="#666" /><rect x="4" y="2.500" width="5.500" height="5" fill="none" stroke="#444" /><rect x="2.500" y="4.500" width="5" height="5" fill="#e8e8e8" stroke="#444" /></svg>
    <svg width="12" height="12" viewBox="0 0 12 12"><rect x=".5" y=".5" width="11" height="11" rx="1.500" fill="#e8e8e8" stroke="#666" /><path d="M3 3l6 6M9 3l-6 6" stroke="#333" strokeWidth="1.500" /></svg>
  </div>
);

const Spin = () => (
  <div className="w-[13px] h-full border-l border-[#d8d8d8] flex flex-col items-center justify-center gap-[3px] shrink-0">
    <div className="border-x-[4px] border-b-[5px] border-x-transparent border-b-[#555555]" />
    <div className="border-x-[4px] border-t-[5px] border-x-transparent border-t-[#555555]" />
  </div>
);

const Dot = () => <div className="absolute bottom-[4px] left-1/2 -translate-x-1/2 w-[5px] h-[5px] rounded-full bg-[#8b9499]" />;

export default function App() {
  return (
    <div className="relative w-[1920px] h-[1080px] overflow-hidden flex flex-col bg-[#efefef] font-['Noto_Sans',sans-serif] text-[11.3px] leading-none text-[#1c1c1c]">
      {/* title bar */}
      <div className="h-[23px] bg-white flex items-center shrink-0">
        <svg viewBox="0 0 24 24" width="17" height="17" className="ml-[2px]">{Qlogo}</svg>
        <span className="ml-[4px] text-[#7a7a7a] text-[11.3px]">*Naamloos project - QGIS</span>
        <div className="ml-auto flex items-center text-[#a0a0a0]">
          <svg width="45" height="20" viewBox="0 0 45 20"><path d="M18 10h9" stroke="#999" /></svg>
          <svg width="45" height="20" viewBox="0 0 45 20" fill="none" stroke="#999"><rect x="18" y="7" width="7" height="7" /><path d="M20 7V5h7v7h-2" /></svg>
          <svg width="45" height="20" viewBox="0 0 45 20" className="mr-[4px]" fill="none" stroke="#999"><path d="M18 5l10 10M28 5L18 15" /></svg>
        </div>
      </div>
      {/* menu */}
      <div className="h-[20px] shrink-0 flex items-center pl-[10px] gap-[12.500px] bg-[#efefef] border-b border-[#cfcfcf] text-[#8a8a8a] text-[11.500px]">
        {menu.map(([u, r], i) => (
          <span key={i} className="whitespace-nowrap"><span className="underline">{u}</span>{r}</span>
        ))}
      </div>
      {/* toolbar 1 */}
      <div className="h-[39px] shrink-0 flex items-center bg-[linear-gradient(#f8f8f8,#f0f0f0)] border-b border-[#c4c4c4]">
        <Tools items={["h12", ...tb1]} />
      </div>
      {/* toolbar 2 */}
      <div className="h-[38px] shrink-0 flex items-center bg-[linear-gradient(#f8f8f8,#ececec)]">
        <Tools items={["h12", ...tb2]} />
      </div>
      <div className="h-[2px] shrink-0 bg-[#b2b2b2]" />

      {/* main */}
      <div className="flex-1 flex min-h-0">
        <div className="w-[295px] shrink-0 flex flex-col pr-[7px]">
          {/* Browser */}
          <div className="h-[19px] flex items-center pl-[4px] pb-[2px] justify-between">
            <span>Browser</span>
            <Float />
          </div>
          <div className="h-[30px] flex items-center pl-[6px] gap-[5px] pb-[3px]">
            {["addnew", "refresh", "filter", "collapse", "info"].map((n) => (
              <div key={n} className="w-[20px] flex justify-center"><Icon n={n} s={17} /></div>
            ))}
          </div>
          <div className="h-[433px] bg-white border border-[#b8b8b8] pt-[1px]">
            {browser.map(([ic, t, arrow], i) => (
              <div key={i} className="h-[18px] flex items-center">
                <div className="w-[20px] flex justify-center">
                  {arrow && <div className="ml-[-1px] border-y-[4px] border-l-[5px] border-y-transparent border-l-[#555555]" />}
                </div>
                <div className="w-[22px] flex justify-center"><Icon n={ic} s={17} /></div>
                <span className="ml-[3px] whitespace-nowrap">{t}</span>
              </div>
            ))}
          </div>
          <div className="h-[8px] flex justify-center items-center"><div className="w-[18px] border-t-2 border-dotted border-[#c8c8c8]" /></div>
          {/* Lagen */}
          <div className="h-[20px] flex items-center pl-[4px] pb-[2px] justify-between">
            <span>Lagen</span>
            <Float />
          </div>
          <div className="h-[29px] flex items-center pl-[5px] pb-[5px]">
            {["broom", "addgrp", "eye", "filter", "eps2"].map((n) => (
              <div key={n} className="w-[25px] flex justify-center"><Icon n={n} s={17} /></div>
            ))}
            <div className="border-x-[4px] border-t-[5px] border-x-transparent border-t-[#555555] ml-[1px] mr-[2px]" />
            {["expand", "collapse", "rmlayer"].map((n) => (
              <div key={n} className="w-[25px] flex justify-center"><Icon n={n} s={17} /></div>
            ))}
          </div>
          <div className="flex-1 bg-white border border-[#b8b8b8] pt-[1px]">
            <div className="h-[18px] flex items-center font-bold relative">
              <div className="w-[39px] flex justify-end"><Icon n="tblt" s={16} /></div>
              <span className="ml-[6px] text-black">Max_snelheden</span>
              <div className="absolute right-[1px] inset-y-0 w-[3px] bg-[#e6e6e6]" />
            </div>
            <div className="h-[18px] flex items-center bg-[#efefef] font-bold relative">
              <div className="w-[24px]" />
              <div className="w-[13px] h-[13px] border border-[#999999] bg-white flex items-center justify-center">
                <svg width="10" height="10" viewBox="0 0 10 10"><path d="M1.500 5l2.500 3.500L8.500 1" fill="none" stroke="#111" strokeWidth="1.500" /></svg>
              </div>
              <div className="ml-[6px] w-[16px] h-px bg-[#a8ab84]" />
              <span className="ml-[6px] underline text-black">Wegvakken</span>
              <div className="absolute right-[1px] inset-y-0 w-[3px] bg-[#e2e2e2]" />
            </div>
          </div>
        </div>

        {/* map canvas */}
        <div className="relative flex-1 bg-white border-l border-b border-[#b8b8b8] overflow-hidden">
          <MapLayer />
        </div>
      </div>

      {/* status bar */}
      <div className="h-[29px] shrink-0 flex items-center pt-[1px] bg-[#efefef] text-[11px] whitespace-nowrap">
        <div className="ml-[4px] w-[266px] h-[21px] bg-white border border-[#c0c0c0] rounded-[3px] flex items-center pl-[8px] gap-[6px] text-[#666666]">
          <svg width="14" height="14" viewBox="0 0 14 14" fill="none" stroke="#888"><circle cx="8" cy="5.500" r="4.500" /><path d="M5 9l-4 4" strokeWidth="1.500" /></svg>
          <span className="text-[10.600px]">Type om te lokaliseren (Ctrl+K)</span>
        </div>
        <div className="ml-auto flex items-center">
          <span className="w-[58px]">Coordinaat</span>
          <div className="w-[94px] h-[21px] bg-white border border-[#c0c0c0] rounded-[2px] flex items-center pl-[6px]">-160164,398673</div>
          <div className="w-[22px] flex justify-center"><svg width="18" height="18" viewBox="0 0 24 24" fill="none" stroke="#333" strokeWidth="2"><circle cx="12" cy="12" r="8" strokeDasharray="3 2" /><path d="M4 3l16 18M8 6l8 12" /></svg></div>
          <span className="ml-[11px] w-[34px]">Schaal</span>
          <div className="w-[81px] h-[21px] bg-white border border-[#c0c0c0] rounded-[2px] flex items-center pl-[3px]">
            <span className="flex-1">1:1425783</span>
            <div className="w-[20px] h-full border-l border-[#d8d8d8] flex items-center justify-center"><div className="border-x-[4px] border-t-[5px] border-x-transparent border-t-[#666666]" /></div>
          </div>
          <div className="ml-[7px] w-[22px] flex justify-center"><svg width="14" height="18" viewBox="0 0 14 18"><path d="M3.500 8V5a3.500 3.500 0 0 1 7 0v3" fill="none" stroke="#666" strokeWidth="1.500" /><rect x="1" y="8" width="12" height="9" rx="1" fill="#6c6c6c" /></svg></div>
          <span className="ml-[3px] w-[66px]">Vergrootglas</span>
          <div className="w-[86px] h-[21px] bg-white border border-[#c0c0c0] rounded-[2px] flex items-center pl-[5px]"><span className="flex-1">100%</span><Spin /></div>
          <span className="ml-[9px] w-[46px]">Rotatie</span>
          <div className="w-[82px] h-[21px] bg-white border border-[#c0c0c0] rounded-[2px] flex items-center pl-[5px]"><span className="flex-1">0,0 °</span><Spin /></div>
          <div className="ml-[8px] w-[13px] h-[13px] border border-[#888888] bg-white flex items-center justify-center"><svg width="10" height="10" viewBox="0 0 10 10"><path d="M1.500 5l2.500 3.500L8.500 1" fill="none" stroke="#111" strokeWidth="1.500" /></svg></div>
          <span className="ml-[4px] w-[70px]">(Her)teken</span>
          <div className="w-[16px] flex justify-center"><svg width="15" height="15" viewBox="0 0 24 24" fill="none" stroke="#666" strokeWidth="1.500"><circle cx="12" cy="12" r="10" /><ellipse cx="12" cy="12" rx="5" ry="10" /><path d="M2 9h20M2 15h20" /></svg></div>
          <span className="ml-[4px] w-[72px]">EPSG:28992</span>
          <div className="ml-[5px] mr-[6px] w-[18px] flex justify-center"><svg width="18" height="18" viewBox="0 0 18 18"><path d="M9 1c5 0 8 3 8 7s-3 7-8 7H7l-3 3v-4C2 13 1 11 1 8c0-4 3-7 8-7z" fill="#666" /><path d="M5 8h1M8.500 8h1M12 8h1" stroke="#fff" strokeWidth="1.500" /></svg></div>
        </div>
      </div>

      {/* taskbar */}
      <div className="h-[48px] shrink-0 flex items-center bg-[radial-gradient(ellipse_110px_60px_at_1660px_30px,#3d3020,#1a2830)] text-white">
        <div className="ml-[741px] flex items-center">
          {[
            <svg key="w" width="24" height="24" viewBox="0 0 24 24"><rect x="0" y="0" width="11.500" height="11.500" fill="#66d2fa" /><rect x="12.500" y="0" width="11.500" height="11.500" fill="#5accf8" /><rect x="0" y="12.500" width="11.500" height="11.500" fill="#22a8ee" /><rect x="12.500" y="12.500" width="11.500" height="11.500" fill="#1a9fea" /></svg>,
            <svg key="s" width="24" height="24" viewBox="0 0 24 24" fill="none" stroke="#eee" strokeWidth="2.200"><circle cx="14" cy="10" r="7.500" /><path d="M8.500 15.500L3 22" strokeLinecap="round" /></svg>,
            <svg key="t" width="24" height="24" viewBox="0 0 24 24"><rect x="2" y="8" width="13" height="15" rx="1.500" fill="#77797c" /><rect x="8" y="1" width="14" height="16" rx="1.500" fill="#f2f2f2" /></svg>,
            <svg key="d" width="24" height="24" viewBox="0 0 24 24"><rect x="1" y="1" width="22" height="22" rx="1.500" fill="#1d4f96" /><rect x="3" y="3" width="8.500" height="18" rx="1" fill="#fff" /><rect x="13.500" y="3" width="7.500" height="10" fill="#49b4f2" /><rect x="13.500" y="14" width="7.500" height="7" fill="#1780d8" /></svg>,
            <svg key="b" width="24" height="24" viewBox="0 0 24 24"><path d="M8 6V3a4 4 0 0 1 8 0v3" fill="none" stroke="#2aa3e8" strokeWidth="1.500" /><rect x="2" y="5" width="20" height="19" rx="2" fill="#eeeeee" /><rect x="8" y="10" width="3.500" height="3.500" fill="#f25022" /><rect x="12.500" y="10" width="3.500" height="3.500" fill="#7fba00" /><rect x="8" y="14.500" width="3.500" height="3.500" fill="#00a4ef" /><rect x="12.500" y="14.500" width="3.500" height="3.500" fill="#ffb900" /></svg>,
            <svg key="o" width="24" height="24" viewBox="0 0 24 24"><rect x="7" y="6" width="16" height="17" rx="1" fill="#1066b5" /><rect x="0" y="9" width="12" height="12" rx="1" fill="#0a4f92" /><circle cx="6" cy="15" r="3" fill="none" stroke="#fff" strokeWidth="1.500" /><rect x="11" y="0" width="13" height="11" fill="#e9b77b" /><path d="M12 2l5.500 5L23 2" fill="none" stroke="#fff" /></svg>,
            <svg key="wd" width="24" height="24" viewBox="0 0 24 24"><rect x="6" y="1" width="17" height="22" rx="1" fill="#2b7cd3" /><rect x="6" y="12" width="17" height="11" fill="#185abd" /><rect x="1" y="6" width="12" height="12" rx="1" fill="#124a9c" /><text x="7" y="15.500" fontSize="10" fontWeight="700" fill="#fff" textAnchor="middle" fontFamily="Liberation Sans, sans-serif">W</text></svg>,
            <svg key="f" width="24" height="24" viewBox="0 0 24 24"><path d="M2 2h8l2 3h10v18H2z" fill="#f5c344" /><path d="M2 2h8v5H2z" fill="#d69d1e" /><rect x="7" y="15" width="10" height="8" rx="1" fill="#2b90dc" /></svg>,
            <svg key="e" width="26" height="26" viewBox="0 0 24 24"><path d="M2 11a10 10 0 0 1 20 0c0 3-3 4-6 4-3 0-3-1-3-3 0-4-4-5-7-4-2 .5-3 1.500-4 3z" fill="#38c2a5" /><path d="M2 11c1-4 9-6 11-1-4 0-6 2-6 6 0 3 2 6 7 7-6 1-13-3-12-12z" fill="#1478c8" /><circle cx="17.500" cy="19" r="4" fill="#dfe3e6" /><circle cx="17.500" cy="17.800" r="1.500" fill="#777" /></svg>,
            <div key="q" className="w-[38px] h-[40px] rounded-[4px] bg-[#2a3a44] flex items-center justify-center"><svg viewBox="0 0 24 24" width="28" height="28">{Qlogo}</svg></div>,
          ].map((el, i) => (
            <div key={i} className="relative w-[44px] h-[48px] flex items-center justify-center">
              {el}
              {i >= 5 && i < 9 && <Dot />}
              {i === 9 && <div className="absolute bottom-[4px] left-1/2 -translate-x-1/2 w-[16px] h-[3px] rounded bg-[#f2a936]" />}
            </div>
          ))}
        </div>
        <div className="ml-auto flex items-center pr-[15px]">
          <svg width="14" height="10" viewBox="0 0 14 10" fill="none" stroke="#eee" strokeWidth="1.200"><path d="M2 8l5-6 5 6" /></svg>
          <svg className="ml-[10px]" width="18" height="16" viewBox="0 0 18 16" fill="none" stroke="#fff" strokeWidth="1.300"><path d="M1 5q8-6 16 0M3.500 8q5.500-4 11 0M6 11q3-2 6 0" /><circle cx="9" cy="14" r="1" fill="#fff" /></svg>
          <svg className="ml-[7px]" width="18" height="16" viewBox="0 0 18 16" fill="none" stroke="#eee" strokeWidth="1.100"><path d="M1 6h3l4-4v12l-4-4H1zM11 5.500l5 5M16 5.500l-5 5" /></svg>
          <div className="ml-[9px] w-[64px] flex flex-col items-end gap-[6px] text-[11.500px] text-[#e8e8e8]">
            <span>16:35</span>
            <span>2022-01-12</span>
          </div>
        </div>
      </div>

      {/* dialog */}
      <div className="absolute left-[547px] top-[131px] w-[826px] h-[761px] flex flex-col bg-[#efefef] rounded-[8px] overflow-hidden border border-[#b8b8b8] text-[11.200px] shadow-[0_14px_48px_rgba(0,0,0,0.42)]">
        <div className="h-[30px] shrink-0 bg-white flex items-center pl-[7px]">
          <svg viewBox="0 0 24 24" width="18" height="18">{Qlogo}</svg>
          <span className="ml-[4px] text-[11.150px] text-[#222222]">Laag Eigenschappen - Wegvakken | Koppelingen</span>
          <svg className="ml-auto mr-[9px]" width="12" height="12" viewBox="0 0 12 12"><path d="M1 1l10 10M11 1L1 11" stroke="#111" strokeWidth="1.100" /></svg>
        </div>
        <div className="flex-1 flex min-h-0">
          {/* sidebar */}
          <div className="w-[150px] shrink-0 flex flex-col min-h-0">
            <div className="h-[22px] shrink-0 bg-white border-y border-[#c8c8c8] flex items-center pl-[8px]">
              <svg width="14" height="14" viewBox="0 0 14 14" fill="none" stroke="#888"><circle cx="6" cy="6" r="4.500" /><path d="M9.500 9.500l4 4" strokeWidth="1.500" /></svg>
            </div>
            <div className="flex-1 flex min-h-0">
              <div className="w-[136px] bg-[#5d5d5d] pt-[7px] overflow-hidden">
                {side.map(([ic, t], i) => {
                  const active = t === "Koppelingen";
                  return (
                    <div key={t} className={`flex items-center ${active ? "h-[38px] bg-[#efefef] text-[#1c1c1c]" : "h-[36px] text-[#f5f5f5]"}`}>
                      <div className={`shrink-0 flex justify-center ${active ? "w-[37px] mr-[3px]" : "w-[33px] mr-[4px]"}`}><Icon n={ic} s={26} /></div>
                      <span className={`${i === 8 ? "w-[64px] leading-[15px]" : "whitespace-nowrap"}`}>{t}</span>
                    </div>
                  );
                })}
              </div>
              <div className="w-[14px] bg-[#f4f4f4] flex flex-col items-center justify-between relative">
                <div className="h-[20px] w-full border-b border-[#dddddd] bg-[#efefef] flex items-center justify-center"><div className="border-x-[4px] border-b-[4px] border-x-transparent border-b-[#555555]" /></div>
                <div className="flex-1 w-full bg-[#f5f5f5]" />
                <div className="h-[36px] w-full bg-[#e2e2e2]" />
                <div className="h-[12px] w-full bg-[#efefef] flex items-center justify-center"><div className="border-x-[4px] border-t-[4px] border-x-transparent border-t-[#555555]" /></div>
              </div>
            </div>
          </div>
          {/* body */}
          <div className="flex-1 flex flex-col pl-[4px] pr-[2px] pt-[4px] min-w-0">
            <div className="h-[666px] bg-white border border-[#b0b0b0] shrink-0">
              <div className="h-[19px] flex bg-[linear-gradient(#fafafa,#ececec)] border-b border-[#b8b8b8]">
                <div className="w-[100px] pl-[3px] flex items-center border-r border-[#cfcfcf]">Instelling</div>
                <div className="pl-[3px] flex items-center">Waarde</div>
              </div>
            </div>
            <div className="flex gap-[6px] mt-[6px]">
              <div className="w-[28px] h-[24px] rounded-[3px] border border-[#b4b4b4] bg-[linear-gradient(#fafafa,#ececec)] flex items-center justify-center">
                <svg width="15" height="15" viewBox="0 0 15 15"><path d="M5.500 1h4v4.500H14v4H9.500V14h-4V9.500H1v-4h4.500z" fill="#c8e3c4" stroke="#3e8a48" strokeWidth="1.200" /></svg>
              </div>
              <div className="w-[28px] h-[24px] rounded-[3px] border border-[#b4b4b4] bg-[linear-gradient(#fafafa,#ececec)] flex items-center justify-center">
                <svg width="15" height="8" viewBox="0 0 15 8"><rect x="1" y="1" width="13" height="5" fill="#f9d0d0" stroke="#e04a4a" strokeWidth="1.200" /></svg>
              </div>
              <div className="w-[28px] h-[24px] rounded-[3px] border border-[#b4b4b4] bg-[linear-gradient(#fafafa,#ececec)] flex items-center justify-center"><Icon n="pencil" s={16} /></div>
            </div>
            <div className="flex mt-[6px] gap-[6px] items-start">
              <div className="w-[80px] h-[21px] rounded-[3px] border border-[#b4b4b4] bg-[linear-gradient(#fafafa,#ececec)]" />
              <div className="flex-1" />
              {["OK", "Cancel", "Apply", "Help"].map((b) => (
                <div key={b} className={`w-[80px] h-[21px] rounded-[3px] border flex items-center justify-center ${b === "OK" ? "border-[#58a6ea] bg-[linear-gradient(#f6fafd,#e4ecf2)]" : "border-[#b4b4b4] bg-[linear-gradient(#fafafa,#ececec)]"}`}>{b}</div>
              ))}
            </div>
          </div>
        </div>
      </div>

      {/* tooltip */}
      <div className="absolute left-[720px] top-[866px] h-[21px] w-[148px] bg-[#ffffdc] border border-black flex items-center justify-center text-[11.200px] text-black whitespace-nowrap">Nieuwe verbinding maken</div>
    </div>
  );
}
